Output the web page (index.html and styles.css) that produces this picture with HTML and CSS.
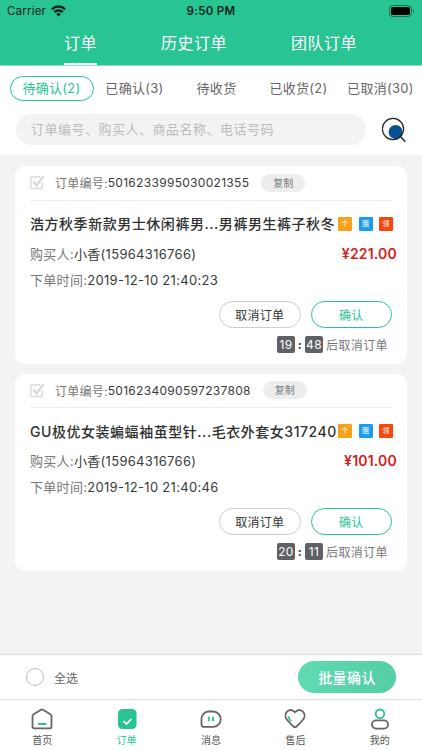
FILE: index.html
```html
<!DOCTYPE html>
<html lang="zh-CN">
<head>
  <meta charset="UTF-8" />
  <meta name="viewport" content="width=device-width, initial-scale=1" />
  <title>订单</title>
  <link rel="stylesheet" href="styles.css">
</head>
<body>

  <header class="header">
    <div class="status">
      <div class="carrier">
        <span>Carrier</span>
        <svg width="15" height="12" viewBox="0 0 15 12" fill="none" stroke="#10251d" stroke-width="2.4">
          <path d="M.8 4.300a9.500 9.500 0 0 1 13.400 0" />
          <path d="M3.200 7.200a6.100 6.100 0 0 1 8.600 0" />
          <path d="M7.500 11.600 5 9.100a3.600 3.600 0 0 1 5 0z" fill="#10251d" stroke="none" />
        </svg>
      </div>
      <span class="time">9:50 PM</span>
      <svg class="battery" width="26" height="12" viewBox="0 0 26 12">
        <rect x=".5" y=".5" width="22" height="11" rx="3" fill="none" stroke="#16724f" />
        <rect x="2" y="2" width="19" height="8" rx="1.6" fill="#000" />
        <path d="M24 4v4c1.200-.5 1.200-3.500 0-4z" fill="#16724f" />
      </svg>
    </div>
    <nav class="tabs">
      <a class="tab active">订单</a>
      <a class="tab">历史订单</a>
      <a class="tab">团队订单</a>
    </nav>
  </header>

  <section class="filters">
    <div class="states">
      <span class="state active">待确认(2)</span>
      <span class="state">已确认(3)</span>
      <span class="state">待收货</span>
      <span class="state">已收货(2)</span>
      <span class="state">已取消(30)</span>
    </div>
    <div class="search">
      <div class="search-box">订单编号、购买人、商品名称、电话号码</div>
      <svg width="26" height="26" viewBox="0 0 26 26">
        <circle cx="13.600" cy="15" r="7" fill="#0a5096" />
        <circle cx="11" cy="12" r="10.600" fill="none" stroke="#222" stroke-width="1.200" />
        <path d="m18.300 19.300 5 5.500" stroke="#222" stroke-width="1.500" />
      </svg>
    </div>
  </section>

  <main class="list">
    <article class="card">
      <div class="card-head">
        <svg class="check" width="15" height="15" viewBox="0 0 15 15" fill="none" stroke="#d9d9d9">
          <path d="M12.300 7v5.500a1 1 0 0 1-1 1H1.800a1 1 0 0 1-1-1v-9.500a1 1 0 0 1 1-1h8.500" stroke-width="1.400" />
          <path d="m3.500 6.500 3 4L13.500 1.200" stroke-width="2.400" />
        </svg>
        <span class="label">订单编号:</span><span class="number">5016233995030021355</span>
        <span class="copy">复制</span>
      </div>
      <div class="title-row">
        <h2 class="title">浩方秋季新款男士休闲裤男<span class="dots">...</span>男裤男生裤子秋冬</h2>
        <span class="tag orange">个</span>
        <span class="tag blue">團</span>
        <span class="tag red">领</span>
      </div>
      <div class="row buyer">
        <span><span class="label">购买人:</span>小香(15964316766)</span>
        <strong class="price">¥221.00</strong>
      </div>
      <div class="row date"><span class="label">下单时间:</span>2019-12-10 21:40:23</div>
      <div class="actions">
        <button class="btn">取消订单</button>
        <button class="btn confirm">确认</button>
      </div>
      <div class="countdown">
        <span class="digit">19</span><b>:</b><span class="digit">48</span><span>后取消订单</span>
      </div>
    </article>

    <article class="card">
      <div class="card-head">
        <svg class="check" width="15" height="15" viewBox="0 0 15 15" fill="none" stroke="#d9d9d9">
          <path d="M12.300 7v5.500a1 1 0 0 1-1 1H1.800a1 1 0 0 1-1-1v-9.500a1 1 0 0 1 1-1h8.500" stroke-width="1.400" />
          <path d="m3.500 6.500 3 4L13.500 1.200" stroke-width="2.400" />
        </svg>
        <span class="label">订单编号:</span><span class="number">5016234090597237808</span>
        <span class="copy">复制</span>
      </div>
      <div class="title-row">
        <h2 class="title">GU极优女装蝙蝠袖茧型针<span class="dots">...</span>毛衣外套女317240</h2>
        <span class="tag orange">个</span>
        <span class="tag blue">團</span>
        <span class="tag red">领</span>
      </div>
      <div class="row buyer">
        <span><span class="label">购买人:</span>小香(15964316766)</span>
        <strong class="price">¥101.00</strong>
      </div>
      <div class="row date"><span class="label">下单时间:</span>2019-12-10 21:40:46</div>
      <div class="actions">
        <button class="btn">取消订单</button>
        <button class="btn confirm">确认</button>
      </div>
      <div class="countdown">
        <span class="digit">20</span><b>:</b><span class="digit">11</span><span>后取消订单</span>
      </div>
    </article>
  </main>

  <div class="batch">
    <label class="select-all"><i class="radio"></i>全选</label>
    <button class="batch-btn">批量确认</button>
  </div>

  <footer class="nav">
    <a class="nav-item">
      <svg width="22" height="22" viewBox="0 0 22 22" fill="none" stroke="#666" stroke-width="1.800" stroke-linejoin="round">
        <path d="M1.500 8.200q0-1 .8-1.600L10 1.700q1-.6 2 0l7.700 4.900q.8.600.8 1.600v10.200q0 2-2 2h-15q-2 0-2-2z" />
        <path d="M7 16h8.300" stroke="#28c493" stroke-width="2" />
      </svg>
      <span>首页</span>
    </a>
    <a class="nav-item active">
      <svg width="22" height="22" viewBox="0 0 22 22">
        <rect x="2" y="1" width="18.500" height="20" rx="4.500" fill="#28c493" />
        <path d="m7.500 13.200 3 2.800 4.800-5" fill="none" stroke="#fff" stroke-width="1.800" />
      </svg>
      <span>订单</span>
    </a>
    <a class="nav-item">
      <svg width="22" height="22" viewBox="0 0 22 22" fill="none" stroke="#666" stroke-width="1.800">
        <path d="M8.500 3.500h4.500a7.700 7.700 0 0 1 0 15.400H4q-2.500 0-2.500-2.500v-5.400a7.500 7.500 0 0 1 7-7.500z" />
        <path d="M8.800 8.800v4.500M13 8.800v4.500" stroke="#28c493" />
      </svg>
      <span>消息</span>
    </a>
    <a class="nav-item">
      <svg width="22" height="22" viewBox="0 0 22 22" fill="none" stroke="#666" stroke-width="1.800">
        <path d="M11 4.200C8.500 1.700 5.500 1.500 3.300 3.400.8 5.700.9 9.200 3 11.700c2 2.500 4.200 4.700 6.500 6.800q1.500 1.300 3 0c2.300-2.100 4.500-4.300 6.500-6.800 2.100-2.500 2.200-6-.3-8.300C16.500 1.500 13.500 1.700 11 4.200z" />
        <path d="M4.500 8.200q.1 3 2.800 5" stroke="#28c493" />
      </svg>
      <span>售后</span>
    </a>
    <a class="nav-item">
      <svg width="22" height="22" viewBox="0 0 22 22" fill="none" stroke="#666" stroke-width="1.800">
        <circle cx="11" cy="5.800" r="4.300" stroke="#28c493" />
        <rect x="3" y="12.400" width="16" height="8.200" rx="4.100" />
      </svg>
      <span>我的</span>
    </a>
  </footer>

</body>
</html>
```
FILE: styles.css
```css
* { box-sizing: border-box; }

body {
  margin: 0;
  width: 422px;
  height: 750px;
  overflow: hidden;
  display: flex;
  flex-direction: column;
  background: #f3f3f3;
  color: #3a3a3a;
  font-family: Inter, "Noto Sans CJK SC", sans-serif;
  font-size: 13px;
}

button {
  font-family: inherit;
  padding: 0;
}

.header {
  height: 66px;
  flex: none;
  background: #28c493;
  border-bottom: 1px solid #8fdfc5;
}

.status {
  height: 22px;
  display: grid;
  grid-template-columns: 1fr auto 1fr;
  align-items: center;
  padding: 0 7px;
  color: #10251d;
  font-size: 11.5px;
}

.carrier {
  display: flex;
  align-items: center;
  gap: 5px;
  letter-spacing: 0.2px;
}

.time {
  font-weight: 600;
  letter-spacing: 0.3px;
}

.battery {
  justify-self: end;
}

.tabs {
  display: flex;
  height: 43px;
  padding-left: 64px;
  gap: 64px;
  color: #fff;
  font-size: 16px;
  letter-spacing: 0.5px;
  line-height: 42px;
}

.tab.active {
  border-bottom: 2px solid #fff;
}

.filters {
  height: 89px;
  flex: none;
  background: #fff;
}

.states {
  display: flex;
  width: 412px;
  padding: 10px 0 0 10px;
  overflow: hidden;
  color: #666;
  letter-spacing: 0.3px;
}

.state {
  flex: none;
  width: 82px;
  height: 25px;
  padding-right: 1px;
  line-height: 25px;
  text-align: center;
  white-space: nowrap;
}

.state.active {
  width: 84px;
  line-height: 23px;
  color: #28c493;
  border: 1px solid #28c493;
  border-radius: 13px;
}

.search {
  display: flex;
  align-items: center;
  gap: 16px;
  padding: 13px 0 0 16px;
}

.search-box {
  width: 350px;
  height: 31px;
  padding-left: 15px;
  border-radius: 16px;
  background: #f3f3f3;
  color: #bbb;
  line-height: 31px;
  letter-spacing: 0.5px;
}

.list {
  flex: 1;
  display: flex;
  flex-direction: column;
  gap: 10px;
  padding: 11px 15px 0;
}

.card {
  height: 197.5px;
  padding: 0 15px;
  border-radius: 10px;
  background: #fff;
}

.card-head {
  display: flex;
  align-items: center;
  height: 34.5px;
  border-bottom: 1px solid #eee;
  font-size: 12px;
}

.check {
  margin-right: 10px;
}

.label {
  color: #777;
}

.card-head .label {
  letter-spacing: 0.25px;
}

.number {
  letter-spacing: 0.3px;
}

.copy {
  width: 44px;
  height: 18px;
  margin-left: 12px;
  border-radius: 9px;
  background: #ededed;
  color: #777;
  font-size: 10px;
  line-height: 18px;
  text-align: center;
}

.title-row {
  display: flex;
  align-items: center;
  height: 46px;
}

.title {
  flex: none;
  width: 308px;
  margin: -1px 0 0;
  color: #303030;
  font-size: 14px;
  font-weight: 500;
  letter-spacing: 0.54px;
  white-space: nowrap;
}

.tag {
  flex: none;
  width: 14px;
  height: 14px;
  margin-right: 6.5px;
  border-radius: 1px;
  color: #fff;
  font-size: 7px;
  line-height: 14px;
  text-align: center;
}

.orange { background: #f8a21c; }
.blue { background: #1a9df0; }
.red { background: #f5480e; }

.row {
  height: 26px;
  line-height: 26px;
  letter-spacing: 0.3px;
  white-space: nowrap;
}

.buyer {
  display: flex;
  justify-content: space-between;
  margin-top: -6px;
  margin-right: -5px;
}

.price {
  color: #d91c1c;
  font-size: 14px;
  font-weight: 600;
  letter-spacing: 0.2px;
}

.actions {
  display: flex;
  justify-content: flex-end;
  gap: 10px;
  margin-top: 8px;
}

.btn {
  width: 81.5px;
  height: 27px;
  border: 1px solid #ccc;
  border-radius: 14px;
  background: #fff;
  color: #333;
  font-size: 12px;
  letter-spacing: 0.3px;
}

.btn.confirm {
  border-color: #28c493;
  color: #28c493;
}

.countdown {
  display: flex;
  justify-content: flex-end;
  align-items: center;
  height: 17px;
  margin-top: 8px;
  padding-right: 4px;
  color: #777;
  font-size: 12px;
  letter-spacing: 0.4px;
}

.countdown b {
  width: 10px;
  color: #333;
  text-align: center;
}

.digit {
  width: 18px;
  height: 17px;
  border-radius: 2px;
  background: #5f6165;
  color: #fff;
  line-height: 17px;
  text-align: center;
}

.digit + span {
  margin-left: 3px;
}

.batch {
  display: flex;
  justify-content: space-between;
  align-items: center;
  height: 45px;
  flex: none;
  padding: 0 26px;
  border-top: 1px solid #ddd;
  background: #fff;
}

.select-all {
  display: flex;
  align-items: center;
  gap: 10px;
  color: #666;
  font-size: 12px;
}

.radio {
  width: 18px;
  height: 18px;
  border: 1px solid #bbb;
  border-radius: 50%;
}

.batch-btn {
  width: 98px;
  height: 32px;
  border: none;
  border-radius: 16px;
  background: linear-gradient(100deg, #5fdbb2, #55cca6);
  color: #fff;
  font-size: 14px;
  font-weight: 500;
  letter-spacing: 0.4px;
}

.nav {
  display: flex;
  height: 51px;
  flex: none;
  border-top: 1px solid #ddd;
  background: #fff;
}

.nav-item {
  flex: 1;
  display: flex;
  flex-direction: column;
  align-items: center;
  padding-top: 8px;
  color: #555;
  font-size: 10px;
  line-height: 20px;
}

.nav-item.active {
  color: #28c493;
}
```
